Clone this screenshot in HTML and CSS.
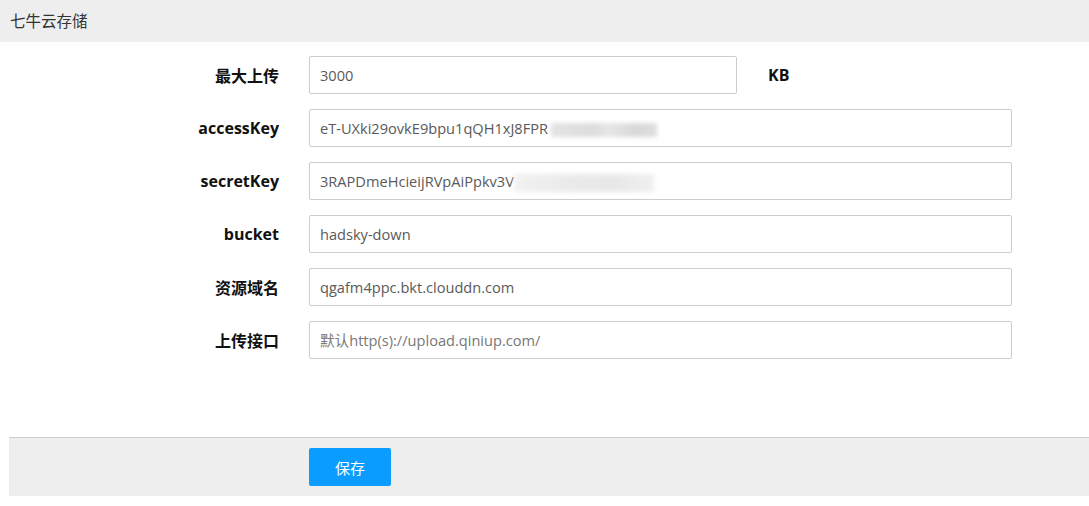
FILE: index.html
```html
<!DOCTYPE html>
<html lang="zh">
<head>
<meta charset="utf-8">
<title>七牛云存储</title>
<link rel="stylesheet" href="styles.css">
</head>
<body>
<div class="title-bar">七牛云存储</div>
<form class="form">
  <div class="row">
    <label class="label">最大上传</label>
    <div class="field field-short"><input class="input" type="text" value="3000"></div>
    <span class="unit">KB</span>
  </div>
  <div class="row">
    <label class="label">accessKey</label>
    <div class="field"><div class="input">eT-UXki29ovkE9bpu1qQH1xJ8FPR<span class="blur blur-a"></span></div></div>
  </div>
  <div class="row">
    <label class="label">secretKey</label>
    <div class="field"><div class="input">3RAPDmeHcieijRVpAiPpkv3V<span class="blur blur-b"></span></div></div>
  </div>
  <div class="row">
    <label class="label">bucket</label>
    <div class="field"><input class="input" type="text" value="hadsky-down"></div>
  </div>
  <div class="row">
    <label class="label">资源域名</label>
    <div class="field"><input class="input" type="text" value="qgafm4ppc.bkt.clouddn.com"></div>
  </div>
  <div class="row">
    <label class="label">上传接口</label>
    <div class="field"><input class="input" type="text" placeholder="默认http(s)://upload.qiniup.com/"></div>
  </div>
</form>
<div class="footer">
  <button class="btn" type="button">保存</button>
</div>
</body>
</html>
```
FILE: styles.css
```css
html, body {
  margin: 0;
  padding: 0;
  background: #fff;
  font-family: "Open Sans", "Noto Sans CJK SC", sans-serif;
  color: #333;
}
.title-bar {
  height: 42px;
  line-height: 42px;
  background: #eeeeee;
  padding-left: 10px;
  font-size: 15.5px;
  color: #333;
}
.form {
  margin-top: 14px;
  display: flex;
  flex-direction: column;
  gap: 15px;
}
.row {
  display: flex;
  align-items: center;
  height: 38px;
}
.label {
  width: 279px;
  text-align: right;
  font-weight: bold;
  font-size: 16px;
  color: #111;
  margin-right: 30px;
}
.field {
  width: 703px;
  height: 38px;
}
.field-short {
  width: 428px;
}
.input {
  box-sizing: border-box;
  width: 100%;
  height: 38px;
  border: 1px solid #cccccc;
  border-radius: 2px;
  padding: 0 10px;
  font-family: "Open Sans", "Noto Sans CJK SC", sans-serif;
  font-size: 14.6px;
  color: #5a5a5a;
  background: #fff;
  outline: none;
  line-height: 36px;
  display: block;
  white-space: nowrap;
  overflow: hidden;
}
.input::placeholder {
  color: #777;
}
.unit {
  margin-left: 31px;
  font-weight: bold;
  font-size: 16px;
  color: #111;
}
.blur {
  display: inline-block;
  vertical-align: middle;
  filter: blur(2px);
}
.blur-a {
  width: 106px;
  height: 14px;
  margin-left: 3px;
  background: linear-gradient(90deg, #e3e3e3, #dcdcdc 40%, #e6e6e6 55%, #d8d8d8 80%, #dedede);
}
.blur-b {
  width: 140px;
  height: 18px;
  margin-left: 0;
  background: linear-gradient(90deg, #f2f2f2, #eaeaea 40%, #e8e8e8 70%, #f0f0f0);
}
.footer {
  margin-top: 78px;
  margin-left: 9px;
  border-top: 1px solid #cccccc;
  background: #eeeeee;
  padding: 10px 0 10px 300px;
}
.btn {
  display: block;
  width: 82px;
  height: 38px;
  border: none;
  border-radius: 2px;
  background: #0a9dff;
  color: #fff;
  font-family: "Open Sans", "Noto Sans CJK SC", sans-serif;
  font-size: 15px;
  padding: 0;
}
```
